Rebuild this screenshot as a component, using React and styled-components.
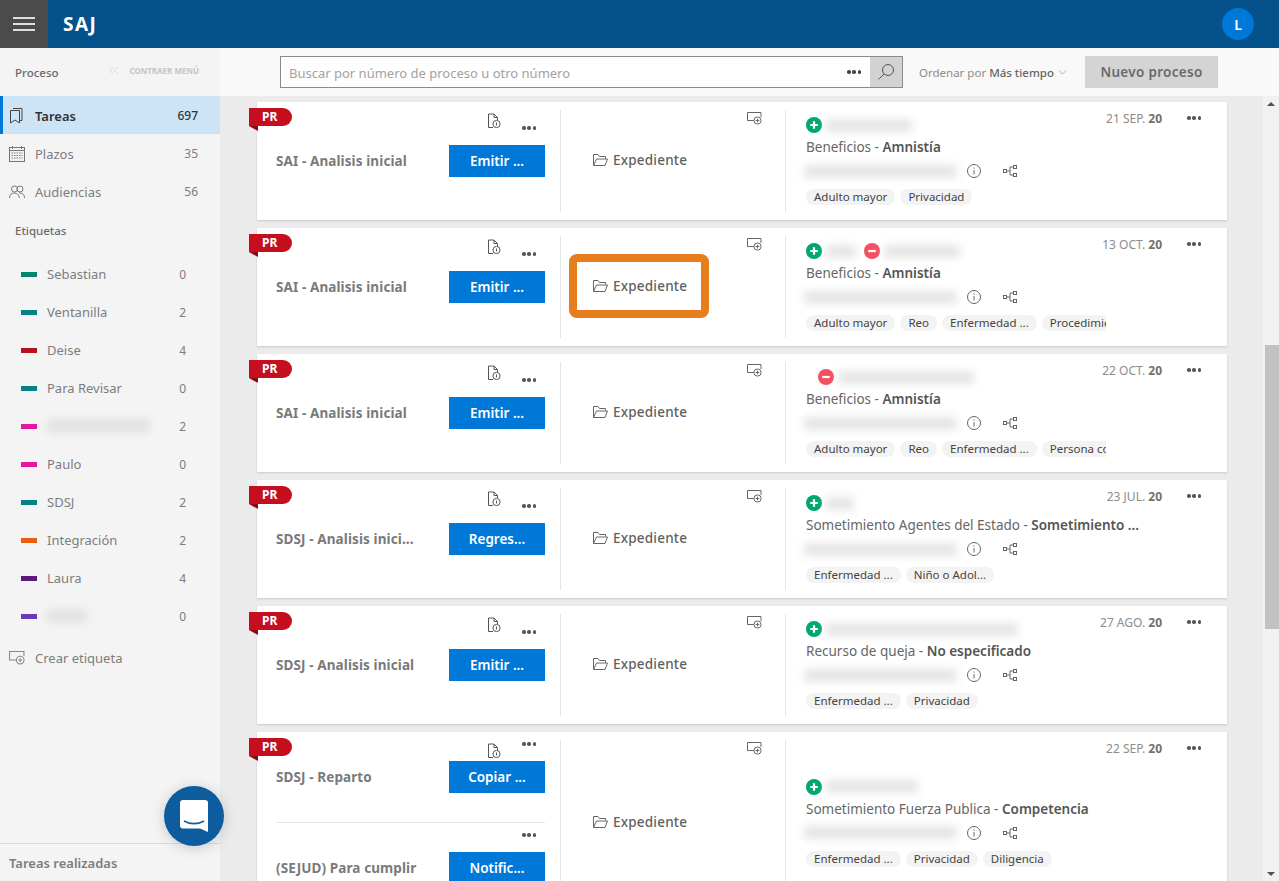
import React from 'react';
import styled, { createGlobalStyle } from 'styled-components';
import { ChevronDown, ChevronsLeft } from 'lucide-react';

const GlobalStyle = createGlobalStyle`
  html, body { margin: 0; padding: 0; height: 100%; overflow: hidden; }
  body { font-family: "Noto Sans", "Open Sans", sans-serif; font-size: 13px; color: #333; }
  * { box-sizing: border-box; }
`;

const Page = styled.div`
  display: flex;
  flex-direction: column;
  height: 881px;
  overflow: hidden;
`;

const Header = styled.header`
  display: flex;
  align-items: center;
  flex: 0 0 48px;
  background: #04518c;
  padding-right: 25px;
`;
const Burger = styled.div`
  display: flex;
  flex-direction: column;
  justify-content: center;
  gap: 4px;
  width: 48px;
  height: 48px;
  padding: 0 13px;
  background: #4b4b4b;
  span { display: block; height: 2px; background: #dedede; }
`;
const Brand = styled.div`
  margin-left: 15px;
  color: #fff;
  font-family: "Open Sans", sans-serif;
  font-size: 19px;
  font-weight: 700;
  letter-spacing: 1.5px;
`;
const Avatar = styled.div`
  display: flex;
  align-items: center;
  justify-content: center;
  width: 32px;
  height: 32px;
  margin-left: auto;
  border-radius: 50%;
  background: #0078d7;
  color: #fff;
  font-size: 14px;
  font-weight: 600;
`;

const Body = styled.div`
  display: flex;
  flex: 1;
  min-height: 0;
`;

const Sidebar = styled.aside`
  display: flex;
  flex-direction: column;
  flex: 0 0 220px;
  background: #f4f4f4;
`;
const SideTop = styled.div`
  display: flex;
  align-items: center;
  justify-content: space-between;
  height: 48px;
  padding: 0 21px 0 15px;
`;
const SideTitle = styled.div`
  color: #6a6a6a;
  font-size: 11.5px;
  font-weight: 500;
`;
const Collapse = styled.div`
  display: flex;
  align-items: center;
  gap: 8px;
  margin-top: -4px;
  color: #c4c4c4;
  font-size: 8px;
  font-weight: 700;
  white-space: nowrap;
`;
const NavRow = styled.div`
  display: flex;
  align-items: center;
  height: 38px;
  padding: 1px 22px 0 9px;
  color: ${(p) => (p.$active ? '#333' : '#7d7d7d')};
  font-size: 13px;
  font-weight: ${(p) => (p.$active ? 600 : 400)};
  background: ${(p) => (p.$active ? '#cce4f6' : 'transparent')};
  box-shadow: ${(p) => (p.$active ? 'inset 3px 0 0 #0078d7' : 'none')};
  svg { flex: 0 0 auto; margin-right: 10px; }
  b { margin-left: auto; font-size: 12px; font-weight: ${(p) => (p.$active ? 500 : 400)}; }
`;
const SideLabel = styled.div`
  height: 24px;
  margin: 9px 0 12px;
  padding-left: 15px;
  color: #6a6a6a;
  font-size: 11.5px;
  font-weight: 500;
  line-height: 24px;
`;
const LabelRow = styled.div`
  display: flex;
  align-items: center;
  height: 38px;
  padding: 0 34px 0 21px;
  color: #7d7d7d;
  font-size: 13px;
  b { margin-left: auto; font-size: 12px; font-weight: 400; }
`;
const Swatch = styled.i`
  flex: 0 0 16px;
  height: 5px;
  margin-right: 10px;
  background: ${(p) => p.$color};
`;
const CreateRow = styled.div`
  display: flex;
  align-items: center;
  height: 38px;
  margin-top: 4px;
  padding-left: 9px;
  color: #7d7d7d;
  font-size: 13px;
  svg { margin-right: 10px; }
`;
const SideFoot = styled.div`
  display: flex;
  align-items: center;
  height: 38px;
  margin-top: auto;
  padding: 1px 0 0 9px;
  border-top: 1px solid #dcdcdc;
  color: #7d7d7d;
  font-size: 13px;
  font-weight: 600;
`;

const Redacted = styled.span`
  display: block;
  flex: 0 0 auto;
  width: ${(p) => p.$w}px;
  height: ${(p) => p.$h || 13}px;
  margin-left: ${(p) => p.$ml || 0}px;
  border-radius: 2px;
  background: #dadada;
  opacity: 0.7;
  filter: blur(4px);
`;

const Main = styled.main`
  display: flex;
  flex-direction: column;
  flex: 1;
  min-width: 0;
`;
const Toolbar = styled.div`
  display: flex;
  align-items: center;
  flex: 0 0 48px;
  padding: 0 61px 0 60px;
  background: #f9f9f9;
`;
const SearchBox = styled.div`
  display: flex;
  align-items: center;
  width: 623px;
  height: 32px;
  border: 1px solid #8a8a8a;
  background: #fff;
`;
const SearchInput = styled.input`
  flex: 1;
  min-width: 0;
  height: 100%;
  padding: 2px 8px 0;
  border: 0;
  outline: 0;
  background: transparent;
  font-family: inherit;
  font-size: 13px;
  &::placeholder { color: #a2a2a2; opacity: 1; }
`;
const SearchBtn = styled.div`
  display: flex;
  align-items: center;
  justify-content: center;
  width: 32px;
  height: 100%;
  margin-left: 9px;
  background: #d2d2d2;
`;
const Sort = styled.div`
  display: flex;
  align-items: center;
  margin-left: 16px;
  color: #8c8c8c;
  font-size: 11.5px;
  white-space: nowrap;
  b { margin-left: 3px; color: #666; font-weight: 500; }
  svg { margin-left: 2px; color: #777; }
`;
const NewButton = styled.div`
  display: flex;
  align-items: center;
  justify-content: center;
  width: 133px;
  height: 32px;
  margin-left: auto;
  background: #d4d4d4;
  color: #6a6a6a;
  font-size: 13.5px;
  font-weight: 600;
  letter-spacing: 0.3px;
`;

const Content = styled.div`
  display: flex;
  flex: 1;
  min-height: 0;
  background: #ebebeb;
`;
const List = styled.div`
  flex: 1;
  min-width: 0;
  padding: 6px 36px 0 37px;
  overflow: hidden;
`;
const Scrollbar = styled.div`
  display: flex;
  flex-direction: column;
  flex: 0 0 16px;
  position: relative;
  background: #f1f1f1;
`;
const Arrow = styled.i`
  position: absolute;
  left: 4px;
  ${(p) => (p.$down ? 'bottom: 5px;' : 'top: 6px;')}
  border-left: 4px solid transparent;
  border-right: 4px solid transparent;
  ${(p) => (p.$down ? 'border-top: 4px solid #505050;' : 'border-bottom: 4px solid #505050;')}
`;
const Thumb = styled.div`
  width: 14px;
  height: 284px;
  margin: 249px 0 0 2px;
  background: #c1c1c1;
`;

const Card = styled.article`
  position: relative;
  display: grid;
  grid-template-columns: 304px 225px 1fr;
  min-height: 118px;
  margin-bottom: 8px;
  padding: 8px 0;
  background: #fff;
  box-shadow: 0 1px 2px rgba(0, 0, 0, 0.14);
`;
const Ribbon = styled.div`
  position: absolute;
  top: 6px;
  left: -8px;
  width: 43px;
  height: 18px;
  padding-left: 13px;
  border-radius: 0 9px 9px 0;
  background: #c50f1f;
  color: #fff;
  font-size: 12px;
  font-weight: 700;
  line-height: 18px;
  &::after {
    content: '';
    position: absolute;
    top: 18px;
    left: 0;
    border-top: 5px solid #8a0a15;
    border-left: 9px solid transparent;
  }
`;
const TasksCol = styled.section`
  padding: 0 15px 0 19px;
  border-right: 1px solid #e6e6e6;
`;
const Task = styled.div`
  padding-bottom: ${(p) => ({ single: 34, first: 29, second: 21 })[p.$kind]}px;
  ${(p) => p.$kind === 'second' && 'border-top: 1px solid #e6e6e6;'}
`;
const TaskTop = styled.div`
  display: flex;
  justify-content: flex-end;
  gap: 21px;
  height: ${(p) => ({ single: 35, first: 21, second: 29 })[p.$kind]}px;
  padding-right: 9px;
`;
const DocWrap = styled.div`
  margin-top: 3px;
  height: 14px;
`;
const Dots = styled.div`
  display: flex;
  gap: 1.75px;
  height: 4px;
  margin-top: ${(p) => p.$top || 0}px;
  i {
    width: 3.5px;
    height: 3.5px;
    border-radius: 50%;
    background: ${(p) => p.$color || '#555'};
  }
`;
const TaskBody = styled.div`
  display: flex;
  align-items: center;
  justify-content: space-between;
`;
const TaskName = styled.div`
  color: #7a7a7a;
  font-size: 13.5px;
  font-weight: 700;
  white-space: nowrap;
  letter-spacing: 0.1px;
`;
const Action = styled.div`
  display: flex;
  align-items: center;
  justify-content: center;
  flex: 0 0 96px;
  height: 32px;
  background: #0078d7;
  color: #fff;
  font-size: 13.5px;
  font-weight: 600;
`;

const FileCol = styled.section`
  position: relative;
  display: flex;
  align-items: center;
  padding: 0 0 2px 32px;
  border-right: 1px solid #e6e6e6;
`;
const TagAdd = styled.div`
  position: absolute;
  top: 1px;
  right: 23px;
`;
const FileLink = styled.div`
  position: relative;
  display: flex;
  align-items: center;
  gap: 5px;
  color: #5f5f5f;
  font-size: 13.5px;
  font-weight: 500;
  letter-spacing: 0.2px;
`;
const Highlight = styled.div`
  position: absolute;
  top: -23px;
  left: -24px;
  width: 140px;
  height: 64px;
  border: 8px solid #e67e1e;
  border-radius: 8px;
`;

const InfoCol = styled.section`
  position: relative;
  display: flex;
  flex-direction: column;
  justify-content: center;
  padding: 0 0 1px 20px;
`;
const DateRow = styled.div`
  position: absolute;
  top: 0;
  right: 26px;
  display: flex;
  align-items: center;
  gap: 25px;
  height: 16px;
  color: #8c8c8c;
  font-size: 12px;
  b { color: #707070; font-weight: 700; }
`;
const People = styled.div`
  display: flex;
  align-items: center;
  height: 18px;
  padding-left: ${(p) => p.$indent || 0}px;
`;
const PeopleGap = styled.span`
  flex: 0 0 8px;
`;
const Subject = styled.div`
  height: 20px;
  margin-top: 3px;
  color: #666;
  font-size: 13.5px;
  line-height: 20px;
  white-space: nowrap;
  b { color: #555; font-weight: 600; }
`;
const Meta = styled.div`
  display: flex;
  align-items: center;
  height: 18px;
  margin: 5px 0 0 -2px;
  svg:first-of-type { margin-left: 10px; }
  svg:last-of-type { margin-left: 22px; }
`;
const Tags = styled.div`
  display: flex;
  gap: 5px;
  width: 300px;
  height: 16px;
  margin-top: 9px;
  overflow: hidden;
`;
const Tag = styled.span`
  flex: 0 0 auto;
  height: 16px;
  padding: 0 8px;
  border-radius: 8px;
  background: #f3f3f3;
  color: #444;
  font-size: 11.5px;
  line-height: 16px;
  white-space: nowrap;
`;

const Chat = styled.div`
  position: fixed;
  left: 164px;
  top: 786px;
  display: flex;
  align-items: center;
  justify-content: center;
  width: 60px;
  height: 60px;
  border-radius: 50%;
  background: #0c5c9e;
  box-shadow: 0 2px 14px rgba(0, 0, 0, 0.18);
`;

const DocIcon = () => (
  <svg width="14" height="16" viewBox="0 0 14 16" fill="none" stroke="#555" strokeWidth="1">
    <path d="M6 14.5H1.5V1H7L10.5 4.5V7M7 1V4.5H10.5" />
    <circle cx="9.5" cy="11" r="3.6" />
    <path d="M9.5 9.5V12.5" />
  </svg>
);
const TagAddIcon = ({ size = 15, color = '#666' }) => (
  <svg width={size} height={size * 0.87} viewBox="0 0 15 13" fill="none" stroke={color} strokeWidth="1">
    <path d="M7 8.5H.5V.5H14V5" />
    <circle cx="10.5" cy="8.5" r="3.6" />
    <path d="M8.7 8.5H12.3M10.5 6.7V10.3" />
  </svg>
);
const FolderIcon = () => (
  <svg width="15" height="12" viewBox="0 0 15 12" fill="none" stroke="#666" strokeWidth="1">
    <path d="M.5 11.5V.5H5L6.5 2.5H12.5V4.5M.5 11.5H12L14.5 5H3.5L.5 11.5Z" />
  </svg>
);
const InfoIcon = () => (
  <svg width="14" height="14" viewBox="0 0 14 14" fill="none" stroke="#666" strokeWidth="1">
    <circle cx="7" cy="7" r="6.5" />
    <path d="M7 6V10.5M7 3.5V4.7" />
  </svg>
);
const TreeIcon = () => (
  <svg width="14" height="14" viewBox="0 0 14 14" fill="none" stroke="#666" strokeWidth="1">
    <rect x=".5" y="5.5" width="3" height="3" />
    <rect x="10.5" y="1.5" width="3" height="3" />
    <rect x="10.5" y="9.5" width="3" height="3" />
    <path d="M3.5 7H7M7 3V11M7 3H10.5M7 11H10.5" />
  </svg>
);
const PlusBadge = () => (
  <svg width="16" height="16" viewBox="0 0 16 16">
    <circle cx="8" cy="8" r="8" fill="#00a870" />
    <path d="M8 4.2V11.8M4.2 8H11.8" stroke="#fff" strokeWidth="2.2" />
  </svg>
);
const MinusBadge = () => (
  <svg width="16" height="16" viewBox="0 0 16 16">
    <circle cx="8" cy="8" r="8" fill="#f4505f" />
    <path d="M4.2 8H11.8" stroke="#fff" strokeWidth="2.2" />
  </svg>
);
const BookmarkIcon = () => (
  <svg width="16" height="16" viewBox="0 0 16 16" fill="none" stroke="#444" strokeWidth="1">
    <path d="M1.5 2.5H10.5V15L6 12L1.5 15V2.5Z" />
    <path d="M4 .5H13V12.5H10.5" />
  </svg>
);
const CalendarIcon = () => (
  <svg width="16" height="16" viewBox="0 0 16 16" fill="none" stroke="#777" strokeWidth="1">
    <rect x=".5" y="1.5" width="15" height="14" />
    <path d="M.5 4.5H15.5M3.5 0V3M12.5 0V3" />
    <path d="M2.5 7H13.5M2.5 9.5H13.5M2.5 12H13.5" strokeDasharray="1.5 1" />
  </svg>
);
const PeopleIcon = () => (
  <svg width="16" height="14" viewBox="0 0 16 14" fill="none" stroke="#777" strokeWidth="1">
    <circle cx="5.5" cy="4" r="3" />
    <circle cx="11" cy="4" r="3" />
    <path d="M.5 13C.5 9.5 2.5 8 5.5 8C8 8 10 10 10.5 13M10 8C13 7.5 15.5 9.5 15.5 13" />
  </svg>
);
const ChatIcon = () => (
  <svg width="28" height="32" viewBox="0 0 28 32">
    <path d="M3 0H25A3 3 0 0 1 28 3V32L20 28.5H3A3 3 0 0 1 0 25.5V3A3 3 0 0 1 3 0Z" fill="#fff" />
    <path d="M4 21C10 24.5 18 24.5 24 21" fill="none" stroke="#0c5c9e" strokeWidth="1.6" />
  </svg>
);
const SearchIcon = () => (
  <svg width="16" height="16" viewBox="0 0 16 16" fill="none" stroke="#555" strokeWidth="1">
    <circle cx="10" cy="6" r="5.5" />
    <path d="M6 10L.5 15.5" />
  </svg>
);

const MoreDots = (props) => (
  <Dots {...props}>
    <i />
    <i />
    <i />
  </Dots>
);

const labels = [
  { name: 'Sebastian', count: 0, color: '#00866e' },
  { name: 'Ventanilla', count: 2, color: '#038387' },
  { name: 'Deise', count: 4, color: '#b4121f' },
  { name: 'Para Revisar', count: 0, color: '#038387' },
  { blur: 103, count: 2, color: '#e3189f' },
  { name: 'Paulo', count: 0, color: '#e3189f' },
  { name: 'SDSJ', count: 2, color: '#038387' },
  { name: 'Integración', count: 2, color: '#ea5c0e' },
  { name: 'Laura', count: 4, color: '#5c1a7b' },
  { blur: 40, count: 0, color: '#6b3ab8' },
];

const cards = [
  {
    tasks: [{ name: 'SAI - Analisis inicial', action: 'Emitir ...' }],
    date: '21 SEP.',
    people: [['plus', 86]],
    subject: 'Beneficios',
    detail: 'Amnistía',
    tags: ['Adulto mayor', 'Privacidad'],
  },
  {
    tasks: [{ name: 'SAI - Analisis inicial', action: 'Emitir ...' }],
    date: '13 OCT.',
    highlight: true,
    people: [['plus', 30], ['minus', 76]],
    subject: 'Beneficios',
    detail: 'Amnistía',
    tags: ['Adulto mayor', 'Reo', 'Enfermedad ...', 'Procedimiento'],
  },
  {
    tasks: [{ name: 'SAI - Analisis inicial', action: 'Emitir ...' }],
    date: '22 OCT.',
    indent: 12,
    people: [['minus', 136]],
    subject: 'Beneficios',
    detail: 'Amnistía',
    tags: ['Adulto mayor', 'Reo', 'Enfermedad ...', 'Persona con'],
  },
  {
    tasks: [{ name: 'SDSJ - Analisis inici...', action: 'Regres...' }],
    date: '23 JUL.',
    people: [['plus', 28]],
    subject: 'Sometimiento Agentes del Estado',
    detail: 'Sometimiento ...',
    tags: ['Enfermedad ...', 'Niño o Adol...'],
  },
  {
    tasks: [{ name: 'SDSJ - Analisis inicial', action: 'Emitir ...' }],
    date: '27 AGO.',
    people: [['plus', 192]],
    subject: 'Recurso de queja',
    detail: 'No especificado',
    tags: ['Enfermedad ...', 'Privacidad'],
  },
  {
    tasks: [
      { name: 'SDSJ - Reparto', action: 'Copiar ...' },
      { name: '(SEJUD) Para cumplir', action: 'Notific...' },
    ],
    date: '22 SEP.',
    people: [['plus', 92]],
    subject: 'Sometimiento Fuerza Publica',
    detail: 'Competencia',
    tags: ['Enfermedad ...', 'Privacidad', 'Diligencia'],
  },
];

function CaseCard({ card }) {
  const multi = card.tasks.length > 1;
  return (
    <Card>
      <Ribbon>PR</Ribbon>
      <TasksCol>
        {card.tasks.map((task, i) => {
          const kind = !multi ? 'single' : i === 0 ? 'first' : 'second';
          return (
            <Task key={task.name} $kind={kind}>
              <TaskTop $kind={kind}>
                {i === 0 && (
                  <DocWrap>
                    <DocIcon />
                  </DocWrap>
                )}
                <MoreDots $top={kind === 'single' ? 16 : kind === 'first' ? 2 : 10} />
              </TaskTop>
              <TaskBody>
                <TaskName>{task.name}</TaskName>
                <Action>{task.action}</Action>
              </TaskBody>
            </Task>
          );
        })}
      </TasksCol>
      <FileCol>
        <TagAdd>
          <TagAddIcon />
        </TagAdd>
        <FileLink>
          {card.highlight && <Highlight />}
          <FolderIcon />
          Expediente
        </FileLink>
      </FileCol>
      <InfoCol>
        <DateRow>
          <span>
            {card.date} <b>20</b>
          </span>
          <MoreDots />
        </DateRow>
        <People $indent={card.indent}>
          {card.people.map(([type, w], i) => (
            <React.Fragment key={i}>
              {type === 'plus' ? <PlusBadge /> : <MinusBadge />}
              <Redacted $w={w} $ml={4} />
              {i < card.people.length - 1 && <PeopleGap />}
            </React.Fragment>
          ))}
        </People>
        <Subject>
          {card.subject} - <b>{card.detail}</b>
        </Subject>
        <Meta>
          <Redacted $w={153} />
          <InfoIcon />
          <TreeIcon />
        </Meta>
        <Tags>
          {card.tags.map((t) => (
            <Tag key={t}>{t}</Tag>
          ))}
        </Tags>
      </InfoCol>
    </Card>
  );
}

export default function App() {
  return (
    <Page>
      <GlobalStyle />
      <Header>
        <Burger>
          <span />
          <span />
          <span />
        </Burger>
        <Brand>SAJ</Brand>
        <Avatar>L</Avatar>
      </Header>
      <Body>
        <Sidebar>
          <SideTop>
            <SideTitle>Proceso</SideTitle>
            <Collapse>
              <ChevronsLeft size={15} strokeWidth={1} />
              CONTRAER MENÚ
            </Collapse>
          </SideTop>
          <NavRow $active>
            <BookmarkIcon />
            Tareas
            <b>697</b>
          </NavRow>
          <NavRow>
            <CalendarIcon />
            Plazos
            <b>35</b>
          </NavRow>
          <NavRow>
            <PeopleIcon />
            Audiencias
            <b>56</b>
          </NavRow>
          <SideLabel>Etiquetas</SideLabel>
          {labels.map((l, i) => (
            <LabelRow key={i}>
              <Swatch $color={l.color} />
              {l.name || <Redacted $w={l.blur} $h={14} />}
              <b>{l.count}</b>
            </LabelRow>
          ))}
          <CreateRow>
            <TagAddIcon size={16} color="#888" />
            Crear etiqueta
          </CreateRow>
          <SideFoot>Tareas realizadas</SideFoot>
        </Sidebar>
        <Main>
          <Toolbar>
            <SearchBox>
              <SearchInput placeholder="Buscar por número de proceso u otro número" />
              <MoreDots $color="#444" />
              <SearchBtn>
                <SearchIcon />
              </SearchBtn>
            </SearchBox>
            <Sort>
              Ordenar por <b>Más tiempo</b>
              <ChevronDown size={13} strokeWidth={1} />
            </Sort>
            <NewButton>Nuevo proceso</NewButton>
          </Toolbar>
          <Content>
            <List>
              {cards.map((c, i) => (
                <CaseCard key={i} card={c} />
              ))}
            </List>
            <Scrollbar>
              <Arrow />
              <Thumb />
              <Arrow $down />
            </Scrollbar>
          </Content>
        </Main>
      </Body>
      <Chat>
        <ChatIcon />
      </Chat>
    </Page>
  );
}
